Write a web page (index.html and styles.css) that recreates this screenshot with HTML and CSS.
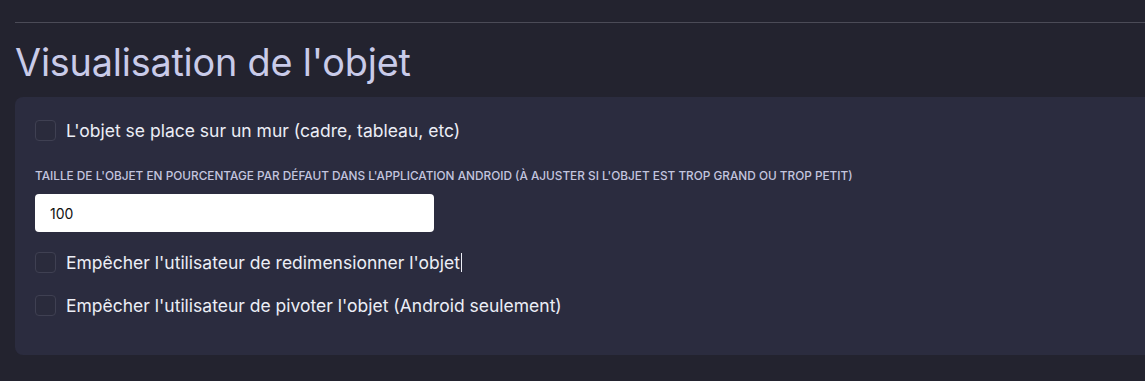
FILE: index.html
```html
<!DOCTYPE html>
<html lang="fr">
<head>
<meta charset="utf-8">
<link rel="stylesheet" href="styles.css">
</head>
<body>
<div class="page">
  <hr class="rule">
  <h2 class="title">Visualisation de l'objet</h2>
  <div class="panel">
    <label class="check">
      <span class="box"></span>
      <span class="check-text">L'objet se place sur un mur (cadre, tableau, etc)</span>
    </label>
    <div class="field">
      <div class="field-label">Taille de l'objet en pourcentage par défaut dans l'application Android (à ajuster si l'objet est trop grand ou trop petit)</div>
      <div class="input">100</div>
    </div>
    <label class="check">
      <span class="box"></span>
      <span class="check-text">Empêcher l'utilisateur de redimensionner l'objet<span class="caret"></span></span>
    </label>
    <label class="check">
      <span class="box"></span>
      <span class="check-text">Empêcher l'utilisateur de pivoter l'objet (Android seulement)</span>
    </label>
  </div>
</div>
</body>
</html>
```

FILE: styles.css
```css
html, body {
  margin: 0;
  padding: 0;
  background: #23232f;
  height: 100%;
  overflow: hidden;
}
.page {
  padding: 22px 0 0 15px;
  font-family: "Inter", "Liberation Sans", sans-serif;
}
.rule {
  margin: 0;
  border: 0;
  height: 1px;
  background: #4b4b57;
}
.title {
  margin: 14px 0 0 0;
  font-size: 37.8px;
  line-height: 50px;
  font-weight: 400;
  color: #c9cbe9;
  letter-spacing: -0.2px;
}
.panel {
  margin-top: 10px;
  background: #2b2c3f;
  border-radius: 8px 0 0 8px;
  padding: 23px 20px 23px 20px;
  height: 212px;
}
.check {
  display: flex;
  align-items: center;
  gap: 10px;
  height: 21px;
}
.box {
  width: 19px;
  height: 19px;
  border: 1px solid #3f4052;
  border-radius: 4px;
  background: #2a2b3c;
  flex: none;
}
.check-text {
  font-size: 17.5px;
  color: #eceef6;
  line-height: 21px;
  display: flex;
  align-items: center;
}
.caret {
  display: inline-block;
  width: 1px;
  height: 19px;
  background: #eceef6;
  margin-left: 1px;
}
.field {
  margin-top: 29px;
  margin-bottom: 20px;
}
.field-label {
  font-size: 11.8px;
  font-weight: 500;
  text-transform: uppercase;
  color: #c3c5df;
  line-height: 12px;
  letter-spacing: 0;
}
.input {
  margin-top: 12px;
  width: 399px;
  height: 38px;
  background: #ffffff;
  border-radius: 4px;
  box-sizing: border-box;
  padding-left: 15px;
  display: flex;
  align-items: center;
  font-size: 14px;
  color: #111;
}
.check + .check {
  margin-top: 22px;
}
```
